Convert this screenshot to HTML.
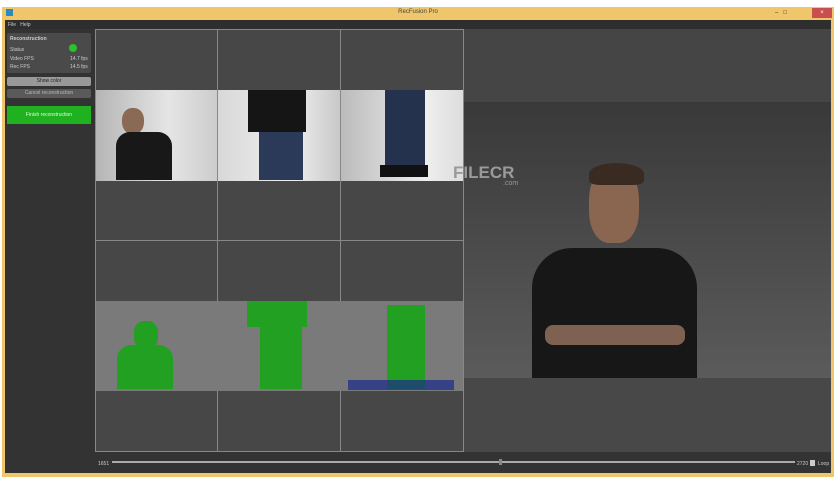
<!DOCTYPE html><html><head><style>
*{margin:0;padding:0;box-sizing:border-box}
body{width:836px;height:484px;background:#fff;position:relative;overflow:hidden;font-family:"Liberation Sans",sans-serif}
.a{position:absolute}
.t{font-size:5px;color:#ccc}
</style></head><body>
<div class="a" style="left:2px;top:7px;width:832px;height:470px;background:#efc76a"></div>
<div class="a" style="left:6px;top:9px;width:7px;height:7px;background:#2a8ac4"></div>
<div class="a" style="left:0;top:9px;width:836px;text-align:center;font-size:6px;color:#444">RecFusion Pro</div>
<div class="a" style="left:775px;top:10px;font-size:6px;color:#333">–&nbsp;&nbsp;&nbsp;□</div>
<div class="a" style="left:812px;top:8px;width:20px;height:10px;background:#c94f4f;color:#fff;font-size:6px;text-align:center;line-height:10px">×</div>
<div class="a" style="left:5px;top:20px;width:826px;height:453px;background:#333"></div>
<div class="a" style="left:5px;top:20px;width:826px;height:9px;background:#2e2e2e"></div>
<div class="a t" style="left:8px;top:22px">File&nbsp;&nbsp; Help</div>
<!-- left panel -->
<div class="a" style="left:7px;top:33px;width:84px;height:40px;background:#4a4a4a;border-radius:2px"></div>
<div class="a t" style="left:10px;top:36px;font-weight:bold">Reconstruction</div>
<div class="a t" style="left:10px;top:47px">Status</div>
<div class="a" style="left:69px;top:44px;width:8px;height:8px;border-radius:50%;background:#27c427"></div>
<div class="a t" style="left:10px;top:56px">Video FPS</div><div class="a t" style="left:70px;top:56px">14.7 fps</div>
<div class="a t" style="left:10px;top:64px">Rec FPS</div><div class="a t" style="left:70px;top:64px">14.5 fps</div>
<div class="a" style="left:7px;top:77px;width:84px;height:9px;background:#999;border-radius:2px;font-size:5px;color:#222;text-align:center;line-height:9px">Show color</div>
<div class="a" style="left:7px;top:89px;width:84px;height:9px;background:#5a5a5a;border-radius:2px;font-size:5px;color:#bbb;text-align:center;line-height:9px">Cancel reconstruction</div>
<div class="a" style="left:7px;top:106px;width:84px;height:18px;background:#1fb11f;font-size:5px;color:#dfd;text-align:center;line-height:18px">Finish reconstruction</div>
<!-- grid -->
<div class="a" style="left:95px;top:29px;width:369px;height:423px;background:#474747;border:1px solid #888"></div>
<div class="a" style="left:217px;top:29px;width:1px;height:423px;background:#888"></div>
<div class="a" style="left:340px;top:29px;width:1px;height:423px;background:#888"></div>
<div class="a" style="left:95px;top:240px;width:369px;height:1px;background:#888"></div>
<!-- photos -->
<div class="a" style="left:96px;top:90px;width:121px;height:91px;background:linear-gradient(90deg,#b5b5b5,#e5e5e5 60%,#ccc)"></div>
<div class="a" style="left:122px;top:108px;width:22px;height:26px;background:#8a6a55;border-radius:45%"></div>
<div class="a" style="left:116px;top:132px;width:56px;height:48px;background:#181818;border-radius:14px 14px 0 0"></div>
<div class="a" style="left:218px;top:90px;width:122px;height:91px;background:linear-gradient(90deg,#d8d8d8,#f0f0f0 60%,#c8c8c8)"></div>
<div class="a" style="left:248px;top:90px;width:58px;height:42px;background:#151515"></div>
<div class="a" style="left:259px;top:132px;width:44px;height:48px;background:#2a3a58"></div>
<div class="a" style="left:341px;top:90px;width:122px;height:91px;background:linear-gradient(90deg,#bbb,#eee 70%,#ddd)"></div>
<div class="a" style="left:385px;top:90px;width:40px;height:80px;background:#25324d"></div>
<div class="a" style="left:380px;top:165px;width:48px;height:12px;background:#111"></div>
<!-- depth -->
<div class="a" style="left:96px;top:301px;width:367px;height:90px;background:#7a7a7a"></div>
<div class="a" style="left:134px;top:321px;width:24px;height:28px;background:#22a022;border-radius:40%"></div>
<div class="a" style="left:117px;top:345px;width:56px;height:44px;background:#22a022;border-radius:14px 14px 0 0"></div>
<div class="a" style="left:247px;top:301px;width:60px;height:26px;background:#22a022"></div>
<div class="a" style="left:260px;top:325px;width:42px;height:64px;background:#22a022"></div>
<div class="a" style="left:387px;top:305px;width:38px;height:84px;background:#22a022"></div>
<div class="a" style="left:348px;top:380px;width:106px;height:10px;background:#1b2a8a;opacity:.7"></div>
<!-- 3d view -->
<div class="a" style="left:464px;top:29px;width:367px;height:73px;background:#454545"></div>
<div class="a" style="left:464px;top:102px;width:367px;height:276px;background:linear-gradient(#393939,#5b5b5b)"></div>
<div class="a" style="left:464px;top:378px;width:367px;height:74px;background:#484848"></div>
<div class="a" style="left:589px;top:165px;width:50px;height:78px;background:#8a6650;border-radius:45% 45% 40% 40%"></div>
<div class="a" style="left:589px;top:163px;width:55px;height:22px;background:#3a2b22;border-radius:50% 50% 20% 20%"></div>
<div class="a" style="left:532px;top:248px;width:165px;height:130px;background:#171717;border-radius:40px 40px 0 0"></div>
<div class="a" style="left:545px;top:325px;width:140px;height:20px;background:#9a7460;border-radius:8px;opacity:.8"></div>
<div class="a" style="left:453px;top:163px;font-size:17px;font-weight:bold;color:#9a9a9a">FILECR</div>
<div class="a" style="left:503px;top:180px;font-size:7px;color:#9a9a9a">.com</div>
<!-- slider -->
<div class="a t" style="left:98px;top:461px">1651</div>
<div class="a" style="left:112px;top:461px;width:683px;height:2px;background:#aaa"></div>
<div class="a" style="left:499px;top:459px;width:3px;height:6px;background:#888"></div>
<div class="a t" style="left:797px;top:461px">2720</div>
<div class="a" style="left:810px;top:460px;width:5px;height:6px;background:#ccc"></div>
<div class="a t" style="left:818px;top:461px">Loop</div>
</body></html>
